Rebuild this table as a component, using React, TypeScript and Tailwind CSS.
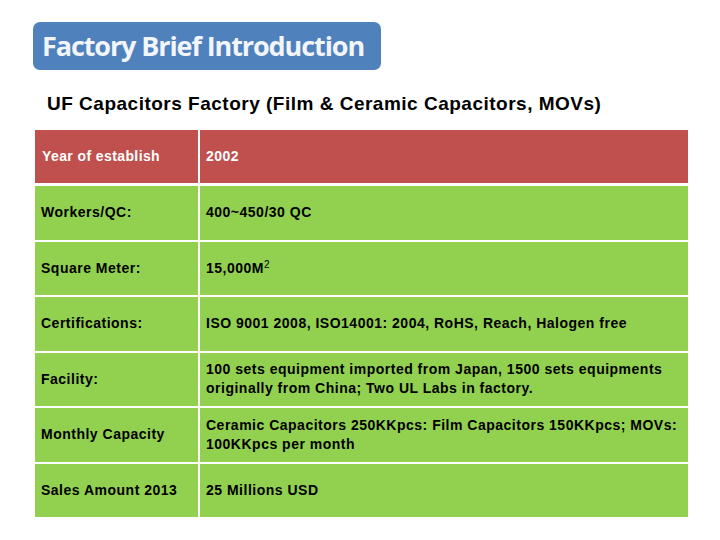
const rows = [
  { label: "Workers/QC:", value: <>400~450/30 QC</> },
  { label: "Square Meter:", value: <>15,000M<sup className="text-[10px] font-normal">2</sup></> },
  { label: "Certifications:", value: <>ISO 9001 2008, ISO14001: 2004, RoHS, Reach, Halogen free</> },
  {
    label: "Facility:",
    value: <>100 sets equipment imported from Japan, 1500 sets equipments originally from China; Two UL Labs in factory.</>,
  },
  {
    label: "Monthly Capacity",
    value: <>Ceramic Capacitors 250KKpcs: Film Capacitors 150KKpcs; MOVs: 100KKpcs per month</>,
  },
  { label: "Sales Amount 2013", value: <>25 Millions USD</> },
];

export default function App() {
  return (
    <div className="w-[720px] h-[540px] bg-white relative overflow-hidden">
      <div className="pt-[22px] pl-[33px]">
        <div className="w-[348px] h-[48px] bg-[#4f81bd] rounded-[7px] flex items-center pl-[9px]">
          <span className="text-[27px] font-bold text-[#f2f5fa] font-['Open_Sans',sans-serif] tracking-[-1.1px]">
            Factory Brief Introduction
          </span>
        </div>
      </div>

      <div className="pl-[47px] pt-[22px] text-[19px] leading-[24px] tracking-[0.5px] font-bold text-black font-['Liberation_Sans',Arial,sans-serif]">
        UF Capacitors Factory (Film &amp; Ceramic Capacitors, MOVs)
      </div>

      <div className="ml-[35px] mt-[14px] w-[653px] flex flex-col gap-[2px] font-['Liberation_Sans',Arial,sans-serif] text-[14px] font-bold tracking-[0.5px]">
        <div className="flex h-[53px] gap-[2px] mb-[1px]">
          <div className="w-[163px] bg-[#c0504d] text-white flex items-center pl-[7px] tracking-[0.4px]">Year of establish</div>
          <div className="flex-1 bg-[#c0504d] text-white flex items-center pl-[6px]">2002</div>
        </div>
        {rows.map((row) => (
          <div key={row.label} className="flex h-[53.5px] gap-[2px]">
            <div className="w-[163px] bg-[#92d050] text-black flex items-center pl-[6px]">{row.label}</div>
            <div className="flex-1 bg-[#92d050] text-black flex items-center pl-[6px] pr-[6px] leading-[19px]">
              <span>{row.value}</span>
            </div>
          </div>
        ))}
      </div>
    </div>
  );
}
